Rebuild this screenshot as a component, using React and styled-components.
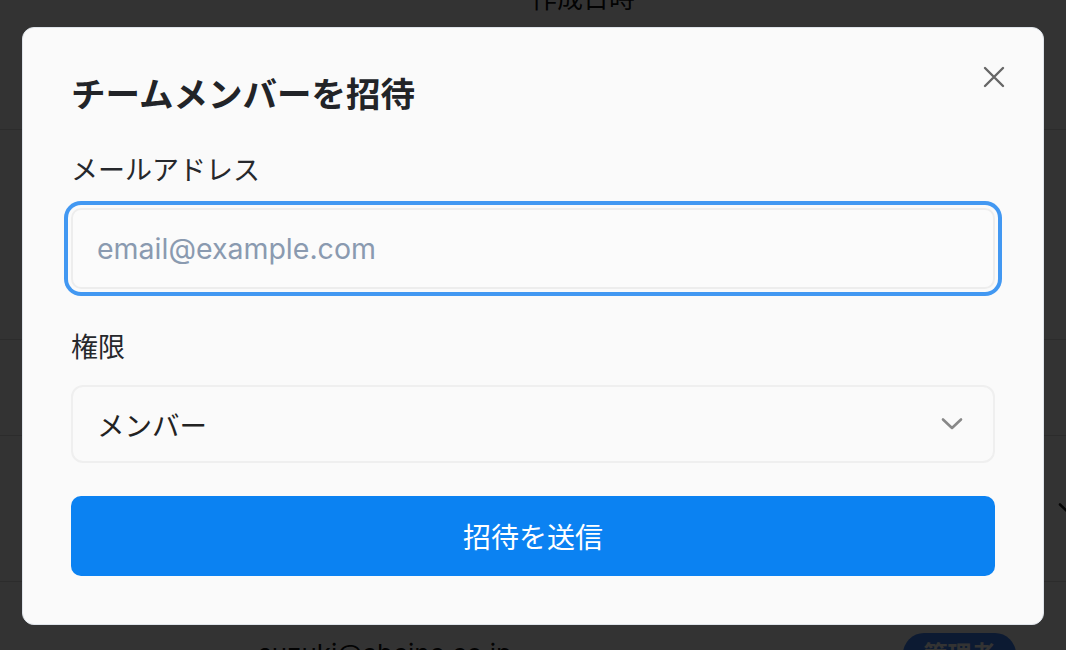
import React from "react";
import styled, { createGlobalStyle } from "styled-components";

const GlobalStyle = createGlobalStyle`
    html, body {
        margin: 0;
        padding: 0;
        background-color: #ffffff;
        font-family: Inter, "Noto Sans CJK JP", sans-serif;
        overflow: hidden;
    }
`;

const Page = styled.div`
    width: 1066px;
    height: 650px;
    overflow: hidden;
`;

const Table = styled.div`
    display: flex;
    flex-direction: column;
`;

const Row = styled.div`
    display: grid;
    grid-template-columns: 258px 250px 150px 245px 1fr;
    align-items: ${(p) => p.$align || "start"};
    height: ${(p) => p.$height}px;
    padding-top: ${(p) => p.$pad || 0}px;
    box-sizing: border-box;
    border-bottom: 1px solid #dcdcdc;
    font-size: 26px;
    line-height: 39px;
    color: #111;
`;

const HeadCell = styled.div`
    grid-column: 3;
    text-align: center;
    white-space: nowrap;
    margin-top: -21px;
    color: #111;
`;

const EmailCell = styled.div`
    grid-column: 2 / span 2;
    white-space: nowrap;
    margin-top: 1px;
`;

const Badge = styled.span`
    grid-column: 5;
    justify-self: start;
    width: 113px;
    height: 42px;
    border-radius: 21px;
    background-color: #3d82f8;
    color: #ffffff;
    font-weight: 700;
    font-size: 24px;
    display: flex;
    justify-content: center;
    align-items: center;
`;

const RowChevron = styled.svg`
    grid-column: 5;
    justify-self: end;
    margin-right: -14px;
    stroke: #222;
`;

const Overlay = styled.div`
    position: fixed;
    inset: 0;
    background-color: rgba(0, 0, 0, 0.8);
    display: flex;
    justify-content: center;
    align-items: center;
`;

const Modal = styled.div`
    position: relative;
    width: 1022px;
    box-sizing: border-box;
    margin-top: 2px;
    background-color: #fafafa;
    border: 1px solid #dfe4ea;
    border-radius: 12px;
    padding: 41px 48px 48px;
    display: flex;
    flex-direction: column;
`;

const CloseButton = styled.button`
    position: absolute;
    top: 38px;
    right: 38px;
    width: 22px;
    height: 22px;
    padding: 0;
    border: none;
    background: transparent;
    cursor: pointer;
    display: flex;
    justify-content: center;
    align-items: center;
`;

const Title = styled.h2`
    margin: 0 0 34px;
    font-family: "Noto Sans CJK JP", sans-serif;
    font-size: 34.5px;
    line-height: 46px;
    font-weight: 700;
    color: #222428;
`;

const Form = styled.form`
    display: flex;
    flex-direction: column;
`;

const Field = styled.div`
    display: flex;
    flex-direction: column;
    gap: 20px;
    margin-bottom: ${(p) => p.$gap}px;
`;

const Label = styled.label`
    font-family: "Noto Sans CJK JP", sans-serif;
    font-size: 27px;
    line-height: 39px;
    color: #26282c;
`;

const Input = styled.input`
    height: 81px;
    box-sizing: border-box;
    padding: 0 24px;
    border: 2px solid #ededed;
    border-radius: 10px;
    background-color: #fbfbfb;
    font-family: Inter, "Noto Sans CJK JP", sans-serif;
    font-size: 28.5px;
    color: #222;
    outline: none;
    box-shadow: 0 0 0 3px #fafafa, 0 0 0 7px #4298f2;

    &::placeholder {
        color: #8a9ab0;
    }
`;

const SelectBox = styled.div`
    height: 78px;
    box-sizing: border-box;
    padding: 0 30px 0 24px;
    border: 2px solid #efefef;
    border-radius: 12px;
    background-color: #fafafa;
    display: flex;
    justify-content: space-between;
    align-items: center;
    font-family: "Noto Sans CJK JP", sans-serif;
    font-size: 27.5px;
    color: #222;
    cursor: pointer;
`;

const SubmitButton = styled.button`
    margin-top: 33px;
    height: 80px;
    border: none;
    border-radius: 10px;
    background-color: #0b82f2;
    color: #ffffff;
    font-family: "Noto Sans CJK JP", sans-serif;
    font-size: 28px;
    cursor: pointer;
`;

const ChevronDown = ({ color = "#888", className }) => (
    <svg className={className} width="22" height="14" viewBox="0 0 22 14" fill="none">
        <path d="M2 2.5 L11 11 L20 2.5" stroke={color} strokeWidth="2.6" strokeLinecap="round" strokeLinejoin="round" />
    </svg>
);

const App = () => {
    return (
        <>
            <GlobalStyle />
            <Page>
                <Table>
                    <Row $height={130}>
                        <HeadCell>作成日時</HeadCell>
                    </Row>
                    <Row $height={210} />
                    <Row $height={96} />
                    <Row $height={146} $align="center">
                        <RowChevron width="22" height="14" viewBox="0 0 22 14" fill="none">
                            <path d="M2 2.5 L11 11 L20 2.5" strokeWidth="2.6" strokeLinecap="round" />
                        </RowChevron>
                    </Row>
                    <Row $height={120} $pad={51}>
                        <EmailCell>suzuki@abcinc.co.jp</EmailCell>
                        <Badge>管理者</Badge>
                    </Row>
                </Table>
            </Page>

            <Overlay>
                <Modal role="dialog">
                    <CloseButton type="button" aria-label="閉じる">
                        <svg width="22" height="22" viewBox="0 0 22 22" fill="none">
                            <path d="M2 2 L20 20 M20 2 L2 20" stroke="#666" strokeWidth="2.4" strokeLinecap="round" />
                        </svg>
                    </CloseButton>
                    <Title>チームメンバーを招待</Title>
                    <Form onSubmit={(e) => e.preventDefault()}>
                        <Field $gap={37}>
                            <Label htmlFor="email">メールアドレス</Label>
                            <Input id="email" type="email" placeholder="email@example.com" />
                        </Field>
                        <Field $gap={0}>
                            <Label>権限</Label>
                            <SelectBox>
                                メンバー
                                <ChevronDown />
                            </SelectBox>
                        </Field>
                        <SubmitButton type="submit">招待を送信</SubmitButton>
                    </Form>
                </Modal>
            </Overlay>
        </>
    );
};

export default App;
